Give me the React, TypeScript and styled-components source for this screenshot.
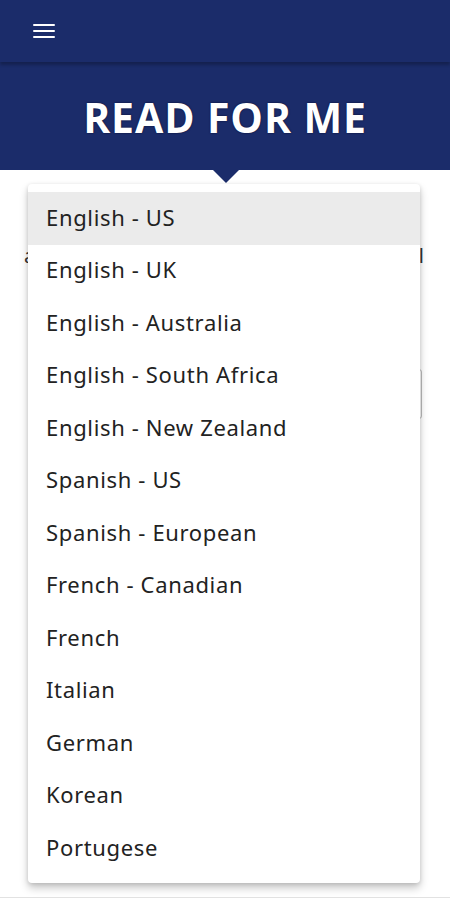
import React from "react";
import styled, { createGlobalStyle } from "styled-components";

const Global = createGlobalStyle`
  html, body { margin: 0; padding: 0; background: #ffffff; }
  body { font-family: "Noto Sans", "Open Sans", sans-serif; }
  #root { min-height: 900px; }
`;

const NAVY = "#1b2c6a";

const Page = styled.div`
  position: relative;
  width: 450px;
  height: 900px;
  overflow: hidden;
  background: #fff;
`;

const TopBar = styled.header`
  height: 62px;
  background: ${NAVY};
  display: flex;
  align-items: center;
  padding-left: 33px;
  box-shadow: 0 3px 3px rgba(0, 0, 0, 0.25);
  position: relative;
  z-index: 2;
`;

const MenuButton = styled.button`
  width: 22px;
  height: 14px;
  padding: 0;
  border: none;
  background: transparent;
  display: flex;
  flex-direction: column;
  justify-content: space-between;
  margin-top: -1px;
  span {
    display: block;
    height: 2px;
    background: #fff;
    border-radius: 1px;
  }
`;

const Banner = styled.section`
  position: relative;
  height: 108px;
  background: ${NAVY};
  display: flex;
  align-items: center;
  justify-content: center;
`;

const Title = styled.h1`
  margin: 1px 0 0;
  font-family: "Open Sans", "Noto Sans", sans-serif;
  font-weight: 700;
  font-size: 41px;
  letter-spacing: 0.9px;
  color: #fff;
  text-shadow: 0 0 2px rgba(0, 0, 30, 0.8);
`;

const Pointer = styled.div`
  position: absolute;
  left: 212px;
  bottom: -13px;
  width: 0;
  height: 0;
  border-left: 14px solid transparent;
  border-right: 14px solid transparent;
  border-top: 14px solid ${NAVY};
`;

const Body = styled.main`
  padding: 0 28px;
  display: flex;
  flex-direction: column;
`;

const Hint = styled.p`
  margin: 72px 0 0 -4px;
  font-size: 20px;
  color: #333;
  display: flex;
  justify-content: space-between;
  width: 400px;
`;

const Field = styled.div`
  margin-top: 100px;
  height: 48px;
  border: 1px solid #bdbdbd;
  border-radius: 3px;
  width: 392px;
`;

const BottomRule = styled.div`
  position: absolute;
  left: 0;
  right: 0;
  bottom: 2px;
  height: 1px;
  background: #e2e2e2;
`;

const Dropdown = styled.ul`
  position: absolute;
  left: 28px;
  top: 184px;
  width: 392px;
  margin: 0;
  padding: 8px 0;
  list-style: none;
  background: #fff;
  border-radius: 4px;
  box-shadow: 0 5px 8px rgba(0, 0, 0, 0.22), 0 1px 4px rgba(0, 0, 0, 0.12);
  z-index: 3;
`;

const Item = styled.li<{ $active?: boolean }>`
  box-sizing: border-box;
  height: 52.5px;
  display: flex;
  align-items: center;
  padding: 0 0 3px 18px;
  font-family: "Noto Sans", sans-serif;
  font-size: 22px;
  letter-spacing: 0.65px;
  color: #222222;
  background: ${(p) => (p.$active ? "#ebebeb" : "transparent")};
`;

const languages = [
  "English - US",
  "English - UK",
  "English - Australia",
  "English - South Africa",
  "English - New Zealand",
  "Spanish - US",
  "Spanish - European",
  "French - Canadian",
  "French",
  "Italian",
  "German",
  "Korean",
  "Portugese",
];

export default function App() {
  return (
    <Page>
      <Global />
      <TopBar>
        <MenuButton aria-label="menu">
          <span />
          <span />
          <span />
        </MenuButton>
      </TopBar>
      <Banner>
        <Title>READ FOR ME</Title>
        <Pointer />
      </Banner>
      <Body>
        <Hint>
          <span>a</span>
          <span>l</span>
        </Hint>
        <Field />
      </Body>
      <BottomRule />
      <Dropdown>
        {languages.map((l, i) => (
          <Item key={l} $active={i === 0}>
            {l}
          </Item>
        ))}
      </Dropdown>
    </Page>
  );
}
